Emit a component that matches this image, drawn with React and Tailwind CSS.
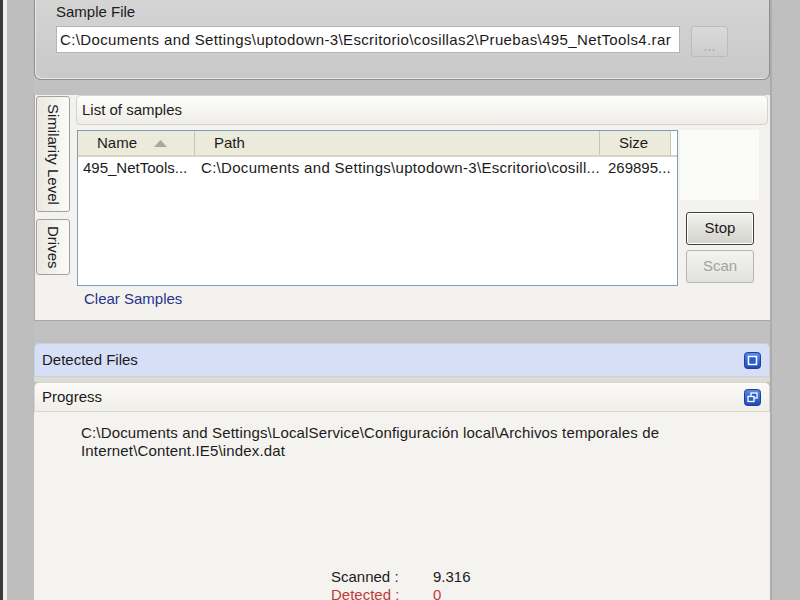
import React from 'react';

function PanelIcon({ restore }) {
  return (
    <svg width="17" height="17" viewBox="0 0 17 17">
      <defs>
        <linearGradient id={restore ? 'gr' : 'gm'} x1="0" y1="0" x2="0" y2="1">
          <stop offset="0" stopColor="#5b8ce6" />
          <stop offset="1" stopColor="#1c48b4" />
        </linearGradient>
      </defs>
      <rect x="0.5" y="0.5" width="16" height="16" rx="3" fill={`url(#${restore ? 'gr' : 'gm'})`} stroke="#1a3f9e" />
      {restore ? (
        <>
          <rect x="7" y="4" width="6" height="5" fill="#2b5bc8" stroke="#fff" strokeWidth="1.3" />
          <rect x="4" y="7.5" width="6" height="5" fill="#2b5bc8" stroke="#fff" strokeWidth="1.3" />
        </>
      ) : (
        <rect x="4.5" y="4.5" width="8" height="8" fill="#2b5bc8" stroke="#fff" strokeWidth="1.5" />
      )}
    </svg>
  );
}

function VTab({ label, h }) {
  return (
    <div
      className={`${h} w-[34px] flex items-center justify-center border border-[#a3a39c] rounded-[3px] bg-gradient-to-r from-[#e9e8e2] to-[#fbfbf8]`}
    >
      <span className="[writing-mode:vertical-rl] leading-[18px]">{label}</span>
    </div>
  );
}

export default function App() {
  return (
    <div className="w-[800px] h-[600px] overflow-hidden flex bg-[#c1c1c1] font-['Liberation_Sans',Arial,sans-serif] text-[15px] text-[#1b1b1b]">
      <div className="w-[34px] flex shrink-0">
        <div className="w-[3px] bg-[#3b3b3b]" />
        <div className="w-[4px] bg-[#efefef]" />
        <div className="flex-1 bg-[#bdbdbd]" />
      </div>

      <div className="w-[736px] flex flex-col shrink-0">
        {/* sample file */}
        <div className="h-[80px] shrink-0 border-x border-b border-[#8f8f8f] rounded-b-[7px] bg-gradient-to-b from-[#d4d4d4] to-[#c9c9c9] pl-[21px] shadow-[inset_1px_-1px_0_#e6e6e6]">
          <div className="pt-[3px] leading-[18px]">Sample File</div>
          <div className="mt-[5px] flex items-start">
            <div className="w-[624px] h-[27px] bg-white border border-[#b5b5b5] pl-[3px] leading-[25px] whitespace-nowrap overflow-hidden tracking-[0.37px]">
              C:\Documents and Settings\uptodown-3\Escritorio\cosillas2\Pruebas\495_NetTools4.rar
            </div>
            <div className="ml-[11px] w-[37px] h-[31px] rounded-[3px] border border-[#bcbcbc] bg-gradient-to-b from-[#dadada] to-[#cdcdcd] flex items-end justify-center pb-[3px] text-[#a5a5a5] leading-[14px]">
              ...
            </div>
          </div>
        </div>

        <div className="h-[15px] shrink-0" />

        {/* samples panel */}
        <div className="h-[226px] shrink-0 bg-[#f3f2ee] border-l border-b border-[#a9a9a9] flex">
          <div className="w-[41px] pl-[1px] pt-[1px] flex flex-col gap-[7px] shrink-0">
            <VTab label="Similarity Level" h="h-[116px]" />
            <VTab label="Drives" h="h-[56px]" />
          </div>

          <div className="flex-1 flex flex-col pr-[2px]">
            <div className="h-[30px] shrink-0 rounded-[4px] border border-[#d3d2cb] bg-gradient-to-b from-[#fdfdfb] to-[#eeede8] pl-[5px] flex items-center">
              List of samples
            </div>

            <div className="mt-[5px] flex">
              <div className="ml-[1px] w-[601px] h-[156px] border border-[#7f9db9] bg-white flex flex-col">
                <div className="h-[26px] flex bg-[#ebeadb] border-b-2 border-[#d8d4c3] text-[15px]">
                  <div className="w-[117px] flex items-center pl-[19px] border-r border-[#c7c5b2]">
                    Name
                    <svg className="ml-[17px]" width="13" height="7" viewBox="0 0 13 7">
                      <path d="M0 7 L6.5 0 L13 7 Z" fill="#aca899" />
                    </svg>
                  </div>
                  <div className="w-[405px] flex items-center pl-[19px] border-r border-[#c7c5b2]">Path</div>
                  <div className="w-[71px] flex items-center pl-[19px] border-r border-[#c7c5b2]">Size</div>
                  <div className="flex-1 bg-white" />
                </div>
                <div className="flex h-[22px] items-center whitespace-nowrap">
                  <div className="w-[118px] pl-[5px]">495_NetTools...</div>
                  <div className="w-[406px] pl-[5px] tracking-[0.3px]">C:\Documents and Settings\uptodown-3\Escritorio\cosill...</div>
                  <div className="pl-[6px]">269895...</div>
                </div>
              </div>

              <div className="flex-1 flex flex-col">
                <div className="ml-[2px] mr-[9px] h-[70px] bg-[#fbfbfa]" />
                <div className="ml-[8px] mt-[12px] w-[68px] h-[33px] rounded-[3px] border border-[#3f3f3f] bg-gradient-to-b from-[#f2f2f0] to-[#d3d2cc] flex items-center justify-center shadow-[inset_0_0_0_1px_#ffffff]">
                  Stop
                </div>
                <div className="ml-[8px] mt-[5px] w-[68px] h-[33px] rounded-[3px] border border-[#b6b6b1] bg-gradient-to-b from-[#f3f3f1] to-[#e3e2dd] flex items-center justify-center text-[#a3a39d]">
                  Scan
                </div>
              </div>
            </div>

            <div className="mt-[4px] pl-[8px] leading-[18px] text-[#28338a]">Clear Samples</div>
          </div>
        </div>

        <div className="h-[22px] shrink-0" />

        {/* detected / progress */}
        <div className="h-[34px] shrink-0 rounded-t-[5px] border border-[#c8cfe0] bg-[#d6dff6] flex items-center justify-between pl-[7px] pr-[8px]">
          <span>Detected Files</span>
          <PanelIcon />
        </div>
        <div className="h-[5px] shrink-0 bg-[#dddcd5]" />
        <div className="h-[30px] shrink-0 rounded-t-[5px] border border-[#d6d5ce] bg-gradient-to-b from-[#fcfbf9] to-[#efeee8] flex items-center justify-between pl-[7px] pr-[8px]">
          <span>Progress</span>
          <PanelIcon restore />
        </div>
        <div className="flex-1 bg-[#f4f3ef] flex flex-col">
          <div className="pt-[12px] pl-[47px] pr-[40px] leading-[18px] tracking-[0.16px]">
            C:\Documents and Settings\LocalService\Configuración local\Archivos temporales de
            <br />
            Internet\Content.IE5\index.dat
          </div>
          <div className="mt-[108px] pl-[297px] leading-[18px]">
            <div className="flex">
              <span className="w-[102px]">Scanned :</span>
              <span>9.316</span>
            </div>
            <div className="flex text-[#c03a3a]">
              <span className="w-[102px]">Detected :</span>
              <span>0</span>
            </div>
          </div>
        </div>
      </div>

      <div className="w-[30px] shrink-0 border-l-2 border-[#acacac] bg-[#bfbfbf]" />
    </div>
  );
}
